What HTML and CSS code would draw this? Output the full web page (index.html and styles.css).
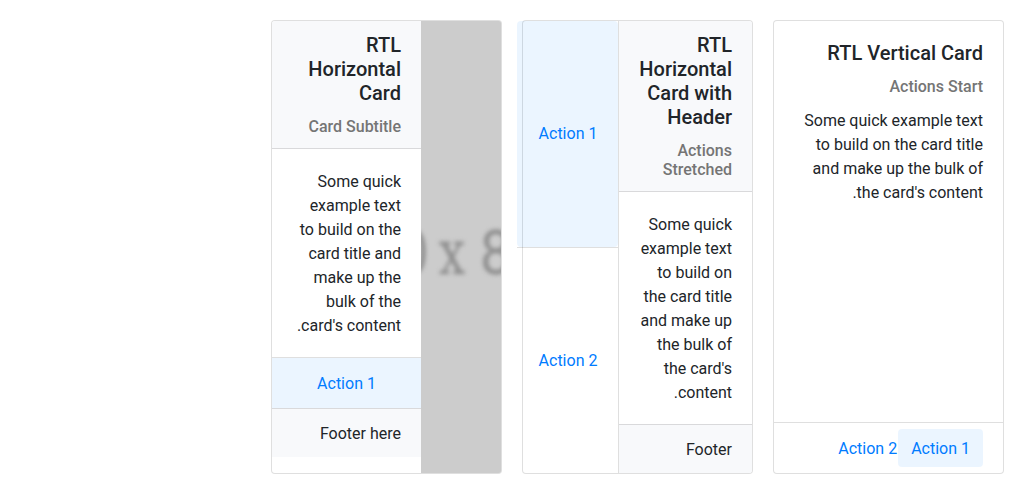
FILE: index.html
```html
<!DOCTYPE html>
<html lang="en" dir="rtl">
<head>
<meta charset="utf-8">
<title>RTL Cards</title>
<link rel="stylesheet" href="styles.css">
</head>
<body>
<main class="deck">
  <section class="card card-vertical">
    <div class="card-body">
      <h5 class="card-title">RTL Vertical Card</h5>
      <h6 class="card-subtitle">Actions Start</h6>
      <p class="card-text">Some quick example text to build on the card title and make up the bulk of the card's content.</p>
    </div>
    <div class="card-actions actions-start">
      <button class="button selected">Action 1</button>
      <button class="button">Action 2</button>
    </div>
  </section>

  <section class="card card-horizontal">
    <div class="card-column">
      <div class="card-header">
        <h5 class="card-title">RTL Horizontal Card with Header</h5>
        <h6 class="card-subtitle">Actions Stretched</h6>
      </div>
      <div class="card-body">
        <p class="card-text">Some quick example text to build on the card title and make up the bulk of the card's content.</p>
      </div>
      <div class="card-footer">Footer</div>
    </div>
    <div class="card-actions actions-vertical">
      <button class="button selected">Action 1</button>
      <button class="button">Action 2</button>
    </div>
  </section>

  <section class="card card-horizontal card-media">
    <svg class="card-image" viewBox="0 0 80 452" preserveAspectRatio="xMidYMid slice">
      <rect width="80" height="452" fill="#ccc"/>
      <g class="image-label" text-anchor="middle">
        <text transform="translate(-8 253) scale(.8 1)">0</text>
        <text class="times" transform="translate(31 253) scale(.76 1)">x</text>
        <text transform="translate(75 253) scale(.82 1)">8</text>
      </g>
    </svg>
    <div class="card-column">
      <div class="card-header">
        <h5 class="card-title">RTL Horizontal Card</h5>
        <h6 class="card-subtitle">Card Subtitle</h6>
      </div>
      <div class="card-body">
        <p class="card-text">Some quick example text to build on the card title and make up the bulk of the card's content.</p>
      </div>
      <div class="card-actions actions-stretched">
        <button class="button selected">Action 1</button>
      </div>
      <div class="card-footer">Footer here</div>
    </div>
  </section>
</main>
</body>
</html>
```
FILE: styles.css
```css
* {
  box-sizing: border-box;
}

body {
  margin: 0;
  background: #fff;
  color: #212529;
  font: 16px/24px Roboto, "Liberation Sans", sans-serif;
  overflow: hidden;
}

.deck {
  display: grid;
  grid-template-columns: repeat(4, 1fr);
  gap: 20px;
  padding: 20px;
}

.card {
  display: flex;
  min-width: 0;
  border: 1px solid rgba(0, 0, 0, 0.125);
  border-radius: 4px;
  background: #fff;
}

.card-vertical {
  flex-direction: column;
}

.card-media {
  overflow: hidden;
}

.card-column {
  display: flex;
  flex: none;
  flex-direction: column;
  width: 134px;
  border-left: 1px solid rgba(0, 0, 0, 0.125);
}

.card-media .card-column {
  width: 149px;
  border-left: 0;
}

.card-header {
  padding: 12px 20px;
  border-bottom: 1px solid rgba(0, 0, 0, 0.125);
  border-top-right-radius: 3px;
  background: #f8f9fb;
}

.card-media .card-header {
  border-radius: 0;
}

.card-body {
  padding: 20.6px 20px 19.4px;
}

.card-vertical .card-body {
  flex: 1;
  padding-top: 20px;
}

.card-footer {
  padding: 12.6px 20px 11.4px;
  background: #f8f9fb;
  border-bottom-right-radius: 3px;
}

.card-body + .card-footer {
  border-top: 1px solid rgba(0, 0, 0, 0.125);
}

.card-media .card-footer {
  border-top: 1px solid rgba(0, 0, 0, 0.125);
  border-radius: 0;
}

.card-title {
  margin: 0 0 12px;
  font-size: 20px;
  font-weight: 500;
  line-height: 24px;
}

.card-subtitle {
  margin: 0;
  color: #757575;
  font-size: 16px;
  font-weight: 500;
  line-height: 19.2px;
}

.card-text {
  margin: 0;
}

.card-subtitle + .card-text {
  margin-top: 12.6px;
}

.card-actions {
  display: flex;
}

.button {
  margin: 0;
  padding: 7.6px 13px 6.4px;
  border: 0;
  border-radius: 4px;
  background: transparent;
  color: #007bff;
  font: inherit;
  white-space: nowrap;
}

.selected {
  background: rgba(0, 123, 255, 0.08);
}

.actions-start {
  padding: 6px 20px;
  border-top: 1px solid rgba(0, 0, 0, 0.125);
}

.actions-start .button + .button {
  margin-right: -12px;
}

.actions-stretched {
  height: 51px;
  border-top: 1px solid rgba(0, 0, 0, 0.125);
}

.actions-stretched .button {
  flex: 1;
  border-radius: 0;
}

.actions-vertical {
  flex: none;
  flex-direction: column;
  width: 101px;
}

.actions-vertical .button {
  flex: 1;
  padding: 0 19.5px 0 20.5px;
}

.actions-vertical .button + .button {
  position: relative;
  padding-top: 1px;
}

.actions-vertical .button + .button::before {
  content: "";
  position: absolute;
  top: 0;
  right: 0;
  left: 0;
  border-top: 1px solid rgba(0, 0, 0, 0.125);
}

.card-image {
  flex: 1;
  min-width: 0;
  align-self: stretch;
  background: #ccc;
}

.image-label {
  direction: ltr;
  fill: #8b8b8b;
  font: 66px "Liberation Mono", monospace;
  filter: blur(1.9px);
}

.times {
  font: 62px "DejaVu Serif", serif;
}
```
